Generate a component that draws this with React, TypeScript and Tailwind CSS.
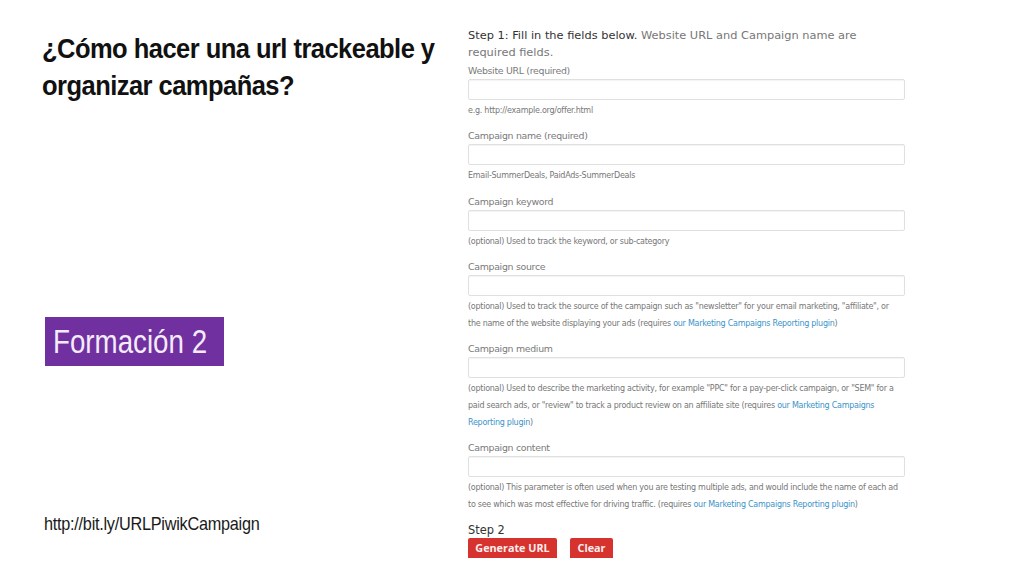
import React from 'react';

const Plugin = ({ children = 'our Marketing Campaigns Reporting plugin' }: { children?: React.ReactNode }) => (
  <span className="text-[#3b93c9]">{children}</span>
);

const Field = ({ label, children }: { label: string; children: React.ReactNode }) => (
  <div className="w-[437px]">
    <div className="text-[9.4px] leading-[14px] h-[14px] tracking-[-0.3px] text-[#7a7a7a]">{label}</div>
    <div className="mt-[1px] h-[21px] rounded-[2px] border border-[#e0e0e0] bg-white shadow-[inset_0_1px_1px_rgba(0,0,0,0.05)]" />
    <div className="mt-[2px] pr-[3px] text-[8px] leading-[17px] tracking-[-0.26px] text-[#777]">{children}</div>
  </div>
);

export default function App() {
  return (
    <div className="flex h-[576px] w-[1024px] overflow-hidden bg-white">
      {/* left side */}
      <div className="w-[468px] shrink-0 pl-[42px] font-['Liberation_Sans',sans-serif]">
        <h1 className="mt-[30px] origin-left scale-x-[0.895] text-[28.5px] leading-[37px] font-bold tracking-[-0.6px] text-[#111] whitespace-nowrap">
          ¿Cómo hacer una url trackeable y
          <br />
          organizar campañas?
        </h1>
        <div className="mt-[213px] ml-[3px] flex h-[49px] w-[179px] items-center bg-[#7030a0] pl-[8px] text-[#f3ecf8]">
          <span className="origin-left scale-x-[0.84] text-[33px] whitespace-nowrap">Formación 2</span>
        </div>
        <div className="mt-[147px] ml-[2px] origin-left scale-x-[0.875] text-[18.6px] leading-[22px] tracking-[-0.3px] text-[#1a1a1a] whitespace-nowrap">
          http://bit.ly/URLPiwikCampaign
        </div>
      </div>

      {/* right side */}
      <div className="flex-1 pt-[27px] font-['DejaVu_Sans',sans-serif]">
        <div className="w-[400px] text-[11.37px] leading-[17px] text-[#777]">
          <span className="text-[#333]">Step 1: Fill in the fields below.</span> Website URL and Campaign name are
          required fields.
        </div>
        <div className="mt-[3px] flex flex-col gap-[10.3px]">
          <Field label="Website URL (required)">e.g. http://example.org/offer.html</Field>
          <Field label="Campaign name (required)">Email-SummerDeals, PaidAds-SummerDeals</Field>
          <Field label="Campaign keyword">(optional) Used to track the keyword, or sub-category</Field>
          <Field label="Campaign source">
            (optional) Used to track the source of the campaign such as "newsletter" for your email marketing, "affiliate", or the name of the website displaying your ads (requires <Plugin />)
          </Field>
          <Field label="Campaign medium">
            (optional) Used to describe the marketing activity, for example "PPC" for a pay-per-click campaign, or "SEM" for a paid search ads, or "review" to track a product review on an affiliate site (requires <Plugin />)
          </Field>
          <Field label="Campaign content">
            (optional) This parameter is often used when you are testing multiple ads, and would include the name of each ad to see which was most effective for driving traffic. (requires <Plugin />)
          </Field>
        </div>
        <div className="mt-[10px] text-[11.4px] leading-[14px] text-[#333]">Step 2</div>
        <div className="mt-[1px] flex gap-[13px] font-['Open_Sans',sans-serif]">
          <button className="h-[20px] w-[89px] rounded-t-[2px] bg-[#d6322e] text-[10.8px] font-bold text-[#fdeeee]">Generate URL</button>
          <button className="h-[20px] w-[43px] rounded-t-[2px] bg-[#d6322e] text-[10.8px] font-bold text-[#fdeeee]">Clear</button>
        </div>
      </div>
    </div>
  );
}
